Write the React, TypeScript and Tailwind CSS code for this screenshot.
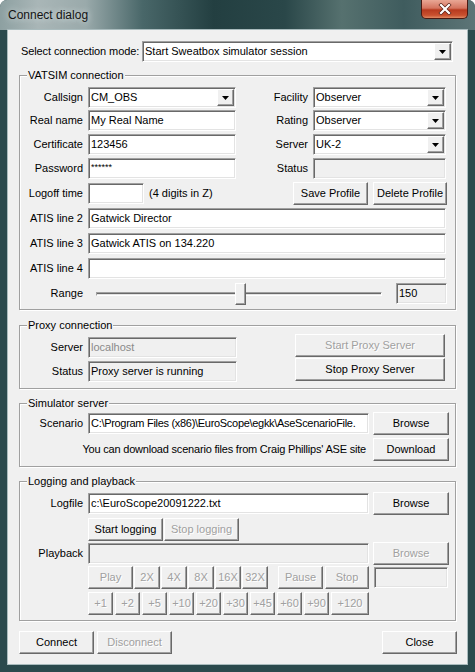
import type { ReactNode } from 'react';

type BoxProps = { className?: string; children?: ReactNode };

// sunken edit box (classic 3D look)
function Edit({ className = '', value = '', disabled = false, dim = false }: { className?: string; value?: string; disabled?: boolean; dim?: boolean }) {
  return (
    <div
      className={`h-[21px] shrink-0 flex items-center pl-[2px] overflow-hidden whitespace-nowrap border border-t-[#a0a0a0] border-l-[#a0a0a0] border-b-white border-r-white shadow-[inset_1px_1px_0_#696969,inset_-1px_-1px_0_#e3e3e3] ${disabled ? 'bg-[#f0f0f0]' : 'bg-white'} ${dim ? 'text-[#8a8a8a]' : 'text-black'} ${className}`}
    >
      {value}
    </div>
  );
}

function Combo({ className = '', value }: { className?: string; value: string }) {
  return (
    <div
      className={`h-[21px] shrink-0 flex items-center bg-white border border-t-[#a0a0a0] border-l-[#a0a0a0] border-b-white border-r-white shadow-[inset_1px_1px_0_#696969,inset_-1px_-1px_0_#e3e3e3] ${className}`}
    >
      <span className="flex-1 pl-[2px] whitespace-nowrap overflow-hidden">{value}</span>
      <span className="w-[17px] h-[17px] mr-[1px] flex items-center justify-center bg-[#f0f0f0] border border-t-white border-l-white border-b-[#696969] border-r-[#696969] shadow-[inset_-1px_-1px_0_#a0a0a0]">
        <svg width="7" height="4" viewBox="0 0 7 4">
          <path d="M0 0H7L3.5 4Z" fill="#000" />
        </svg>
      </span>
    </div>
  );
}

function Btn({ className = '', children, disabled = false }: BoxProps & { disabled?: boolean }) {
  return (
    <button
      type="button"
      className={`h-[23px] shrink-0 flex items-center justify-center bg-[#f0f0f0] whitespace-nowrap border border-t-white border-l-white border-b-[#696969] border-r-[#696969] shadow-[inset_-1px_-1px_0_#a0a0a0] ${disabled ? 'text-[#a0a0a0] [text-shadow:1px_1px_0_#ffffff]' : 'text-black'} ${className}`}
    >
      {children}
    </button>
  );
}

function Label({ className = 'w-[63px]', children }: BoxProps) {
  return <div className={`shrink-0 text-right whitespace-nowrap ${className}`}>{children}</div>;
}

function Group({ title, className = '', children }: BoxProps & { title: string }) {
  return (
    <div className={`relative shrink-0 border border-[#a0a0a0] shadow-[inset_1px_1px_0_#ffffff,1px_1px_0_#ffffff] ${className}`}>
      <span className="absolute -top-[7px] left-[7px] px-[1px] bg-[#f0f0f0] leading-[13px] whitespace-nowrap">{title}</span>
      {children}
    </div>
  );
}

const speeds = ['2X', '4X', '8X', '16X', '32X'];
const jumps = ['+1', '+2', '+5', '+10', '+20', '+30', '+45', '+60', '+90'];

export default function App() {
  return (
    <div className="w-[475px] h-[672px] flex flex-col bg-[#2b4a4d] rounded-t-[7px] overflow-hidden font-['Liberation_Sans',Arial,sans-serif] text-[11px] leading-[13px] text-black">
      {/* title bar */}
      <div className="h-[30px] shrink-0 flex items-start justify-between pl-[8px] pr-[7px] bg-[linear-gradient(90deg,#8da0a1_0%,#a9b6b7_8%,#9aaaab_18%,#496769_30%,#233f41_45%,#2a4749_60%,#56716f_72%,#3f5c5e_85%,#5d7577_100%)]">
        <div className="pt-[8px] text-[12px] leading-[14px] text-[#141414] [text-shadow:0_0_6px_#e6eeee]">Connect dialog</div>
        <div className="w-[47px] h-[19px] flex items-center justify-center rounded-b-[5px] border border-t-0 border-[#4a1a12] bg-[linear-gradient(180deg,#e9a795_0%,#d4745f_45%,#b83a1f_55%,#c9512f_85%,#e08a63_100%)]">
          <svg width="14" height="12" viewBox="0 0 14 12">
            <path d="M3 2L11 10M11 2L3 10" stroke="#5b2318" strokeWidth="3.6" strokeLinecap="square" />
            <path d="M3 2L11 10M11 2L3 10" stroke="#ffffff" strokeWidth="2.2" strokeLinecap="square" />
          </svg>
        </div>
      </div>

      {/* client area */}
      <div className="flex-1 mx-[8px] mb-[8px] bg-[#f0f0f0] shadow-[0_0_0_1px_#a9bbbd] flex flex-col pl-[11px]">
        <div className="mt-[11px] h-[21px] flex items-center">
          <div className="ml-[2px] w-[121px] whitespace-nowrap tracking-[-0.1px]">Select connection mode:</div>
          <Combo className="w-[311px]" value="Start Sweatbox simulator session" />
        </div>

        {/* VATSIM connection */}
        <Group title="VATSIM connection" className="mt-[13px] w-[437px] h-[235px]">
          <div className="flex flex-col">
            <div className="mt-[11px] h-[21px] flex items-center">
              <Label>Callsign</Label>
              <Combo className="ml-[5px] w-[148px]" value="CM_OBS" />
              <Label className="w-[72px]">Facility</Label>
              <Combo className="ml-[5px] w-[133px]" value="Observer" />
            </div>
            <div className="mt-[2px] h-[21px] flex items-center">
              <Label>Real name</Label>
              <Edit className="ml-[5px] w-[148px]" value="My Real Name" />
              <Label className="w-[72px]">Rating</Label>
              <Combo className="ml-[5px] w-[133px]" value="Observer" />
            </div>
            <div className="mt-[3px] h-[21px] flex items-center">
              <Label>Certificate</Label>
              <Edit className="ml-[5px] w-[148px]" value="123456" />
              <Label className="w-[72px]">Server</Label>
              <Combo className="ml-[5px] w-[133px]" value="UK-2" />
            </div>
            <div className="mt-[3px] h-[21px] flex items-center">
              <Label>Password</Label>
              <Edit className="ml-[5px] w-[148px] items-start pt-[2px] text-[9px]" value="******" />
              <Label className="w-[72px]">Status</Label>
              <Edit className="ml-[5px] w-[133px]" disabled />
            </div>
            <div className="mt-[3px] h-[23px] flex items-center">
              <Label>Logoff time</Label>
              <Edit className="ml-[5px] w-[56px]" />
              <span className="ml-[5px] whitespace-nowrap">(4 digits in Z)</span>
              <div className="flex-1" />
              <Btn className="w-[75px]">Save Profile</Btn>
              <Btn className="ml-[5px] w-[74px] mr-[8px]">Delete Profile</Btn>
            </div>
            <div className="mt-[3px] h-[21px] flex items-center">
              <Label>ATIS line 2</Label>
              <Edit className="ml-[5px] w-[358px]" value="Gatwick Director" />
            </div>
            <div className="mt-[4px] h-[21px] flex items-center">
              <Label>ATIS line 3</Label>
              <Edit className="ml-[5px] w-[358px]" value="Gatwick ATIS on 134.220" />
            </div>
            <div className="mt-[4px] h-[21px] flex items-center">
              <Label>ATIS line 4</Label>
              <Edit className="ml-[5px] w-[358px]" />
            </div>
            <div className="mt-[3px] h-[23px] flex items-center">
              <Label>Range</Label>
              <div className="relative ml-[5px] w-[302px] h-[23px] flex items-center px-[8px]">
                <div className="w-full h-[4px] border border-t-[#a0a0a0] border-l-[#a0a0a0] border-b-white border-r-white shadow-[inset_0_1px_0_#696969] bg-[#e3e3e3]" />
                <div className="absolute left-[147px] top-[1px] w-[11px] h-[22px] bg-[#f0f0f0] border border-t-white border-l-white border-b-[#696969] border-r-[#696969] shadow-[inset_-1px_-1px_0_#a0a0a0]" />
              </div>
              <Edit className="ml-[6px] w-[51px]" disabled value="150" />
            </div>
          </div>
        </Group>

        {/* Proxy connection */}
        <Group title="Proxy connection" className="mt-[15px] w-[437px] h-[64px]">
          <div className="flex">
            <div className="flex flex-col pt-[11px]">
              <div className="h-[21px] flex items-center">
                <Label>Server</Label>
                <Edit className="ml-[5px] w-[149px]" disabled dim value="localhost" />
              </div>
              <div className="mt-[3px] h-[21px] flex items-center">
                <Label>Status</Label>
                <Edit className="ml-[5px] w-[149px]" disabled value="Proxy server is running" />
              </div>
            </div>
            <div className="ml-[58px] pt-[8px] flex flex-col gap-[1px]">
              <Btn className="w-[150px]" disabled>Start Proxy Server</Btn>
              <Btn className="w-[150px]">Stop Proxy Server</Btn>
            </div>
          </div>
        </Group>

        {/* Simulator server */}
        <Group title="Simulator server" className="mt-[14px] w-[437px] h-[64px]">
          <div className="flex flex-col pt-[8px]">
            <div className="h-[23px] flex items-center">
              <Label>Scenario</Label>
              <Edit className="ml-[5px] w-[281px] tracking-[-0.3px]" value="C:\Program Files (x86)\EuroScope\egkk\AseScenarioFile." />
              <Btn className="ml-[4px] w-[76px]">Browse</Btn>
            </div>
            <div className="mt-[3px] h-[23px] flex items-center">
              <div className="w-[349px] pr-[3px] text-right whitespace-nowrap tracking-[-0.2px]">You can download scenario files from Craig Phillips' ASE site</div>
              <Btn className="ml-[4px] w-[76px]">Download</Btn>
            </div>
          </div>
        </Group>

        {/* Logging and playback */}
        <Group title="Logging and playback" className="mt-[14px] w-[437px] h-[140px]">
          <div className="flex flex-col pt-[10px]">
            <div className="h-[23px] flex items-center">
              <Label>Logfile</Label>
              <Edit className="ml-[5px] w-[281px]" value="c:\EuroScope20091222.txt" />
              <Btn className="ml-[4px] w-[76px]">Browse</Btn>
            </div>
            <div className="mt-[3px] h-[23px] flex items-center pl-[68px]">
              <Btn className="w-[75px]">Start logging</Btn>
              <Btn className="ml-[1px] w-[75px]" disabled>Stop logging</Btn>
            </div>
            <div className="mt-[1px] h-[23px] flex items-center">
              <Label>Playback</Label>
              <Edit className="ml-[5px] w-[281px]" disabled />
              <Btn className="ml-[4px] w-[76px]" disabled>Browse</Btn>
            </div>
            <div className="mt-[1px] h-[23px] flex items-center pl-[68px]">
              <Btn className="w-[45px]" disabled>Play</Btn>
              {speeds.map((s) => (
                <Btn key={s} className="ml-[1px] w-[26px]" disabled>{s}</Btn>
              ))}
              <Btn className="ml-[10px] w-[45px]" disabled>Pause</Btn>
              <Btn className="ml-[2px] w-[44px]" disabled>Stop</Btn>
              <Edit className="ml-[5px] w-[74px]" disabled />
            </div>
            <div className="mt-[3px] h-[23px] flex items-center pl-[68px] gap-[2px]">
              {jumps.map((j) => (
                <Btn key={j} className="w-[25px]" disabled>{j}</Btn>
              ))}
              <Btn className="w-[38px]" disabled>+120</Btn>
            </div>
          </div>
        </Group>

        <div className="mt-[10px] h-[23px] flex items-center pr-[10px]">
          <Btn className="w-[75px]">Connect</Btn>
          <Btn className="ml-[3px] w-[75px]" disabled>Disconnect</Btn>
          <div className="flex-1" />
          <Btn className="w-[75px]">Close</Btn>
        </div>
      </div>
    </div>
  );
}
